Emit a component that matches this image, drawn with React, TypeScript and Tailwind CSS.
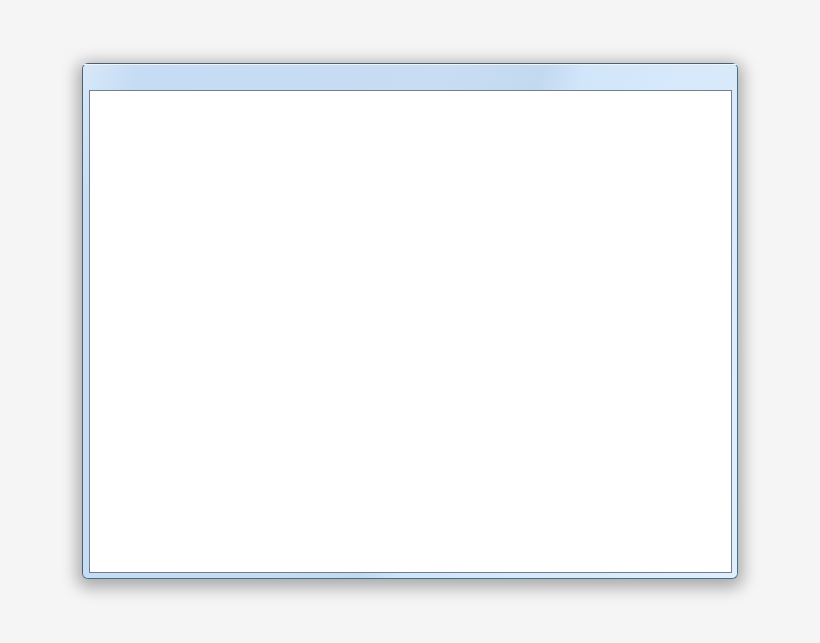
import React from "react";

const App: React.FC = () => {
	return (
		<div className="flex min-h-screen w-full items-start bg-[#f5f5f5] pl-[82px] pt-[63px]">
			<div className="relative flex h-[516px] w-[656px] flex-col rounded-[6px] border border-[#4d6070] border-r-[#3d7388] border-b-[#3d7388] bg-[#cfe3f6] pl-[6px] pr-[5px] pb-[5px] pt-[26px] shadow-[0_4px_16px_5px_rgba(0,0,0,0.3)]">
				{/* glass streaks on the frame */}
				<div className="pointer-events-none absolute inset-0 overflow-hidden rounded-[5px] bg-[linear-gradient(110deg,#d8e8f9_0%,#c6dcf4_7%,#c8ddf4_44%,#c3d9f0_55%,#d2e6fa_60%,#e2eefc_100%)]" />
				<div className="pointer-events-none absolute inset-x-0 top-0 h-px rounded-t-[5px] bg-[#eef5fc]" />
				<div className="relative flex-1 border border-[#6f7f8e] bg-white" />
			</div>
		</div>
	);
};

export default App;
